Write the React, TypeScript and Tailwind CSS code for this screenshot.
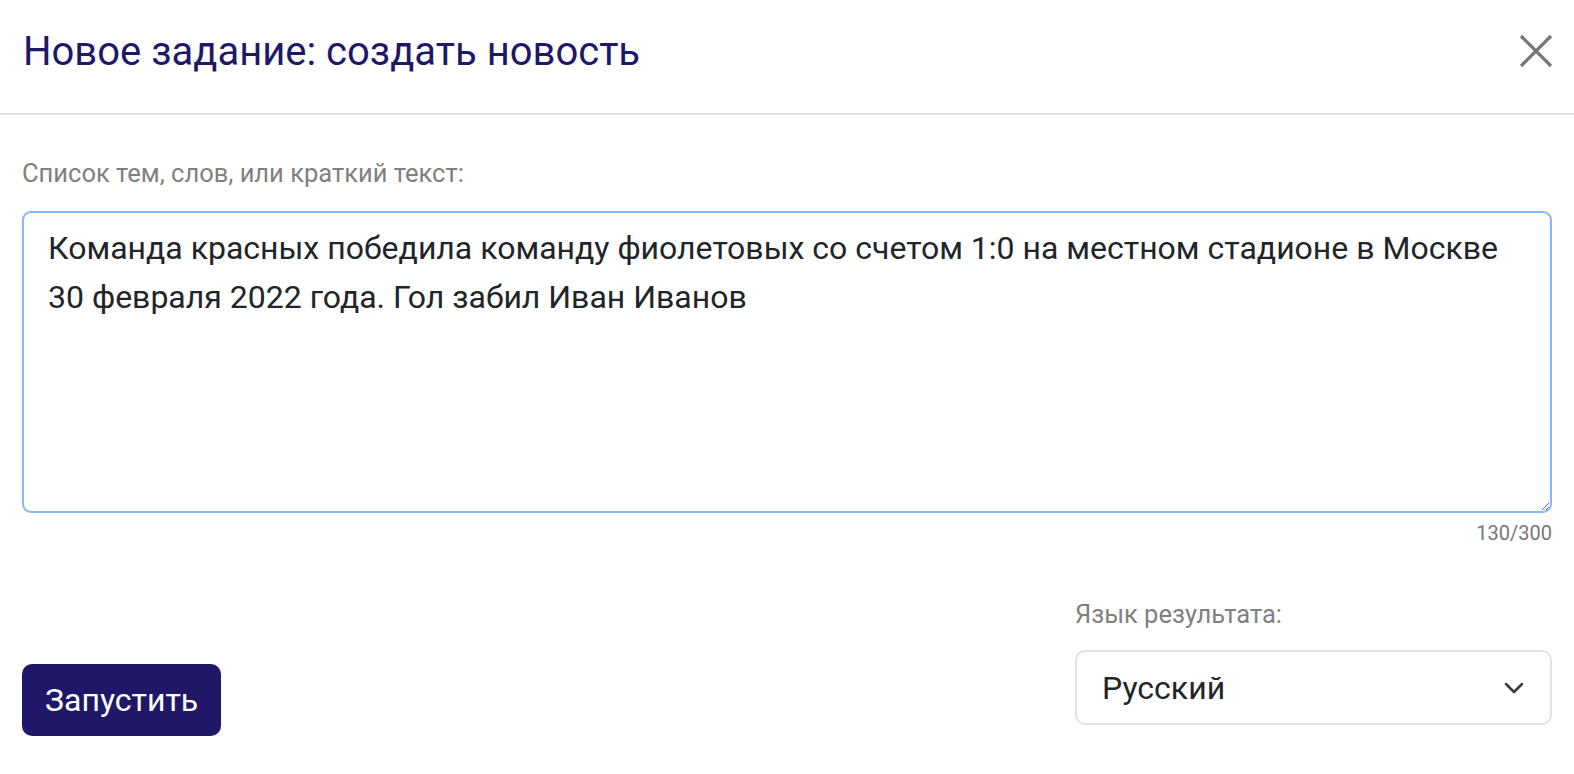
import { useEffect, useRef, useState } from "react";

const TEXT =
  "Команда красных победила команду фиолетовых со счетом 1:0 на местном стадионе в Москве 30 февраля 2022 года. Гол забил Иван Иванов";

export default function App() {
  const [value, setValue] = useState(TEXT);
  const areaRef = useRef<HTMLTextAreaElement>(null);

  // focus with the caret at the end of the text
  useEffect(() => {
    const el = areaRef.current;
    if (!el) return;
    el.focus();
    el.setSelectionRange(el.value.length, el.value.length);
  }, []);

  return (
    <div className="min-h-screen bg-white font-['Roboto',sans-serif] text-[#212529]">
      {/* Header */}
      <div className="flex h-[115px] items-center justify-between border-b-2 border-[#dee2e6] pl-[23px] pr-[21px]">
        <h1 className="pb-[10px] text-[40px] font-normal leading-none text-[#1f1868]">
          Новое задание: создать новость
        </h1>
        <button className="mb-[12px] flex h-[34px] w-[34px] items-center justify-center" aria-label="Закрыть">
          <svg width="34" height="34" viewBox="0 0 34 34" fill="none">
            <path d="M2 2L32 32M32 2L2 32" stroke="#777" strokeWidth="3.2" />
          </svg>
        </button>
      </div>

      {/* Body */}
      <div className="px-[22px] pt-[43px]">
        <label className="block text-[25.5px] leading-[30px] text-[#808080]">
          Список тем, слов, или краткий текст:
        </label>
        <textarea
          ref={areaRef}
          value={value}
          onChange={(e) => setValue(e.target.value)}
          className="mt-[23px] block h-[302px] w-full resize-y rounded-[9px] border-2 border-[#86b7fe] px-[24px] py-[11px] text-[32px] leading-[49px] text-[#212529] caret-[#212529] outline-none"
        />
        <div className="mt-[8px] text-right text-[20px] leading-[24px] text-[#777]">
          {value.length}/300
        </div>

        <div className="mt-[54px] flex items-end justify-between">
          <button className="mb-[-11px] h-[72px] rounded-[10px] bg-[#201768] px-[23px] text-[32px] text-white">
            Запустить
          </button>
          <div className="w-[477px]">
            <div className="text-[25.5px] leading-[30px] text-[#808080]">Язык результата:</div>
            <div className="mt-[21px] flex h-[75px] items-center justify-between rounded-[10px] border-2 border-[#dee2e6] pl-[25px] pr-[26px]">
              <span className="text-[32px] text-[#212529]">Русский</span>
              <svg width="20" height="12" viewBox="0 0 20 12" fill="none">
                <path d="M2 2L10 10L18 2" stroke="#343a40" strokeWidth="2.5" strokeLinecap="round" strokeLinejoin="round" />
              </svg>
            </div>
          </div>
        </div>
      </div>
    </div>
  );
}
